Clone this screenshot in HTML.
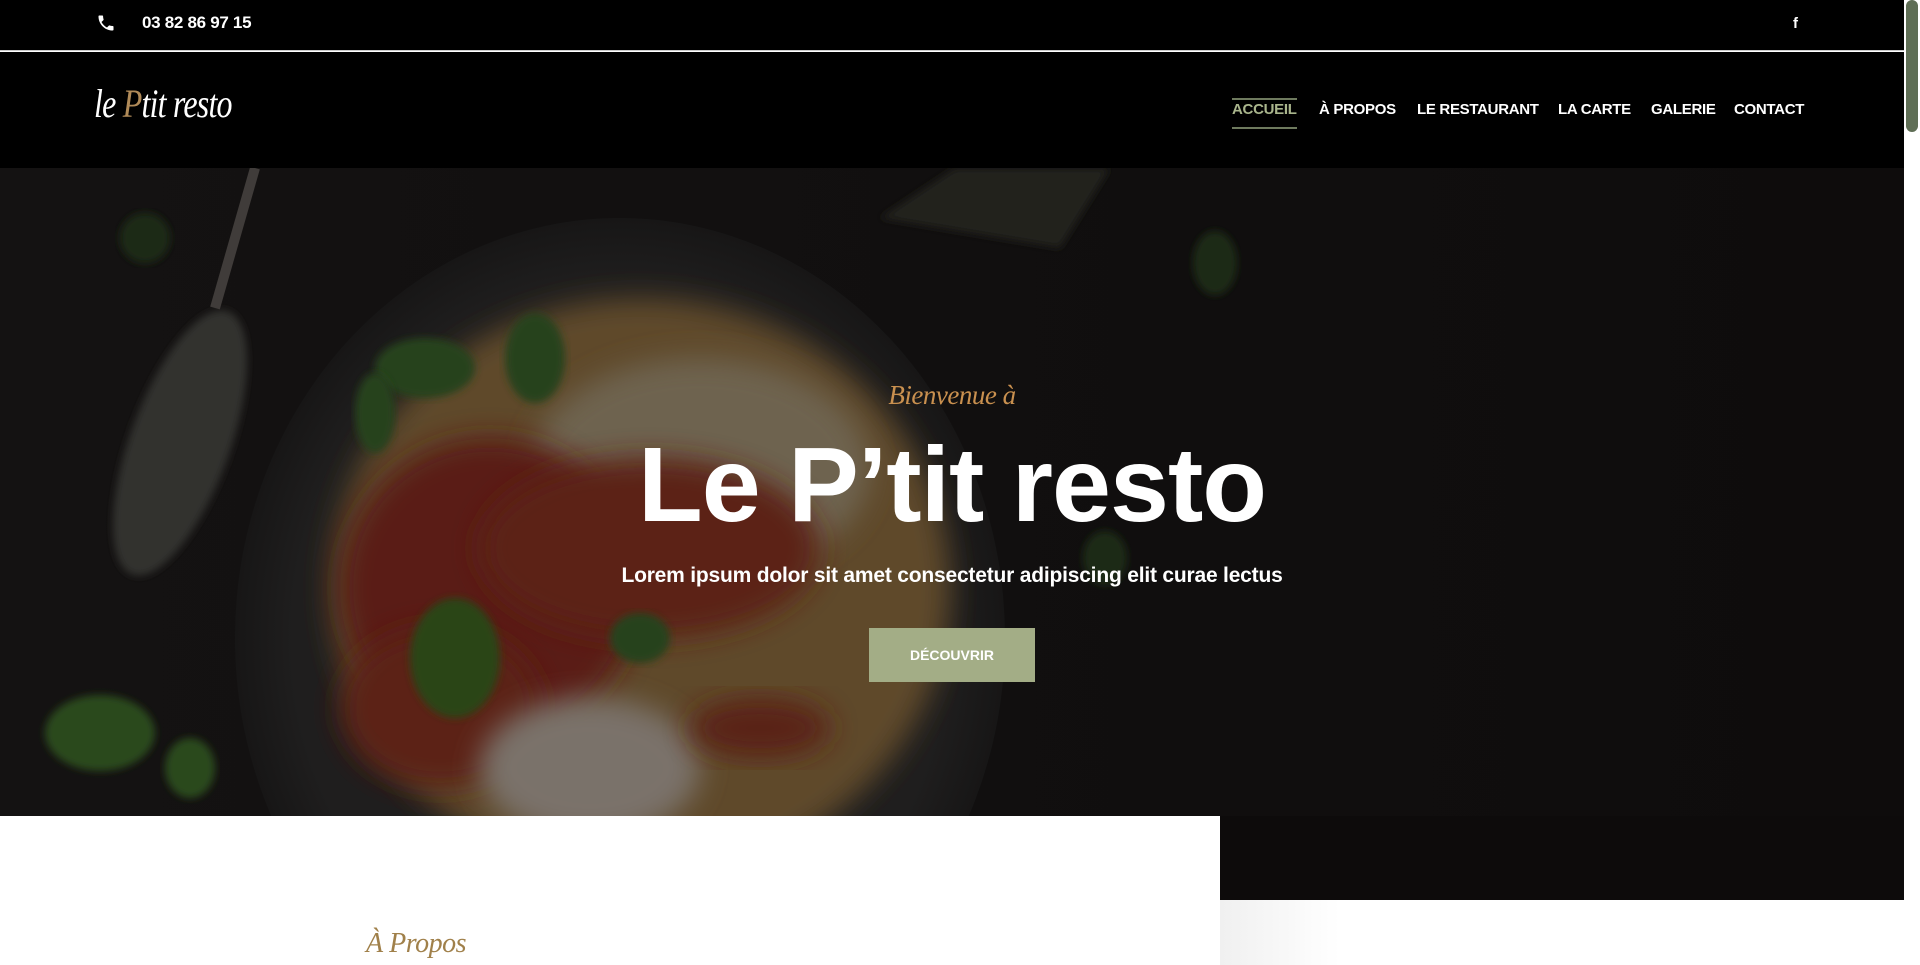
<!DOCTYPE html>
<html><head><meta charset="utf-8"><style>
*{margin:0;padding:0;box-sizing:border-box}
html,body{width:1920px;height:965px;overflow:hidden;background:#fff;font-family:"Liberation Sans",sans-serif;position:relative}
.top{position:absolute;left:0;top:0;width:1904px;height:51px;background:#000;border-bottom:1px solid #c9c9c9}
.phone{position:absolute;left:142px;top:13px;color:#fff;font-size:17px;font-weight:600;letter-spacing:-.3px}
.header{position:absolute;left:0;top:52px;width:1904px;height:116px;background:#000}
.logo{position:absolute;left:94px;top:80px;color:#fff;font-family:"Liberation Serif",serif;font-style:italic;font-size:40px;letter-spacing:-1px;transform:scaleX(.8);transform-origin:left}
.logo b{color:#b08a58;font-weight:400}
.hero{position:absolute;left:0;top:168px;width:1904px;height:648px;overflow:hidden;background:#131212}
.hero2{position:absolute;left:1220px;top:816px;width:684px;height:84px;background:#0d0b0b}
.shade{position:absolute;left:1220px;top:900px;width:120px;height:65px;background:linear-gradient(90deg,#f0f0f0,#fff)}
.sb{position:absolute;left:1904px;top:0;width:16px;height:965px;background:#fff}
.sb div{position:absolute;left:2px;top:0;width:12px;height:132px;background:#5f6e55;border-radius:6px}
.t{position:absolute;left:0;width:1904px;text-align:center;color:#fff}
.n{position:absolute;top:101px;color:#fff;font-size:15px;font-weight:700;letter-spacing:-.3px;white-space:nowrap}
</style></head><body>
<div class="top">
<svg style="position:absolute;left:96px;top:13px" width="20" height="20" viewBox="0 0 24 24"><path fill="#fff" d="M6.6 10.8c1.4 2.8 3.8 5.1 6.6 6.6l2.2-2.2c.3-.3.7-.4 1-.2 1.1.4 2.3.6 3.6.6.6 0 1 .4 1 1V20c0 .6-.4 1-1 1C10.6 21 3 13.4 3 4c0-.6.4-1 1-1h3.5c.6 0 1 .4 1 1 0 1.3.2 2.5.6 3.6.1.3 0 .7-.2 1z"/></svg>
<div class="phone">03 82 86 97 15</div>
<div style="position:absolute;left:1793px;top:15px;color:#fff;font-weight:700;font-size:15px">f</div>
</div>
<div class="header"></div>
<div class="logo">le <b>P</b>tit resto</div>
<div style="position:absolute;left:1232px;top:98px;width:65px;height:2px;background:#6e7a5e"></div>
<div style="position:absolute;left:1232px;top:127px;width:65px;height:2px;background:#6e7a5e"></div>
<div class="n" style="left:1232px;color:#a9b58c">ACCUEIL</div>
<div class="n" style="left:1319px">À PROPOS</div>
<div class="n" style="left:1417px">LE RESTAURANT</div>
<div class="n" style="left:1558px">LA CARTE</div>
<div class="n" style="left:1651px">GALERIE</div>
<div class="n" style="left:1734px">CONTACT</div>
<div class="hero">
<svg width="1904" height="648" style="position:absolute;left:0;top:0">
<defs><filter id="b" x="-20%" y="-20%" width="140%" height="140%"><feGaussianBlur stdDeviation="14"/></filter>
<filter id="b2"><feGaussianBlur stdDeviation="4"/></filter>
<radialGradient id="pl" cx=".5" cy=".5" r=".5"><stop offset=".85" stop-color="#1f1e1e"/><stop offset="1" stop-color="#171616"/></radialGradient>
<linearGradient id="bg" x1="0" x2="1"><stop offset="0" stop-color="#141212"/><stop offset="1" stop-color="#0e0c0c"/></linearGradient></defs>
<rect width="1904" height="648" fill="url(#bg)"/>
<ellipse cx="620" cy="470" rx="385" ry="420" fill="url(#pl)"/>
<ellipse cx="640" cy="420" rx="310" ry="290" fill="#5e4a2a" filter="url(#b)"/>
<ellipse cx="700" cy="300" rx="170" ry="110" fill="#6e6450" filter="url(#b)"/>
<ellipse cx="490" cy="420" rx="150" ry="150" fill="#5a1f14" filter="url(#b)"/>
<ellipse cx="650" cy="380" rx="170" ry="90" fill="#5c2216" filter="url(#b)"/>
<ellipse cx="440" cy="540" rx="100" ry="80" fill="#5c2014" filter="url(#b)"/>
<ellipse cx="590" cy="600" rx="110" ry="70" fill="#7a726a" filter="url(#b)"/>
<ellipse cx="760" cy="560" rx="70" ry="30" fill="#5a2016" filter="url(#b)"/>
<ellipse cx="455" cy="490" rx="45" ry="60" fill="#2a4419" filter="url(#b2)"/>
<ellipse cx="425" cy="200" rx="50" ry="30" fill="#27421b" filter="url(#b2)"/>
<ellipse cx="535" cy="190" rx="30" ry="45" fill="#27421b" filter="url(#b2)"/>
<ellipse cx="375" cy="245" rx="20" ry="40" fill="#27421b" filter="url(#b2)"/>
<ellipse cx="640" cy="470" rx="30" ry="25" fill="#27421b" filter="url(#b2)"/>
<ellipse cx="100" cy="565" rx="55" ry="38" fill="#2a481d" filter="url(#b2)"/>
<ellipse cx="190" cy="600" rx="25" ry="30" fill="#2a481d" filter="url(#b2)"/>
<ellipse cx="1105" cy="390" rx="22" ry="27" fill="#1f2c17" filter="url(#b2)"/>
<ellipse cx="1215" cy="95" rx="22" ry="32" fill="#1f2c17" filter="url(#b2)"/>
<ellipse cx="145" cy="70" rx="25" ry="25" fill="#1c2a16" filter="url(#b2)"/>
<ellipse cx="180" cy="275" rx="50" ry="140" transform="rotate(20 180 275)" fill="#33302e" filter="url(#b2)"/>
<path d="M215 140 L255 0" stroke="#403c3a" stroke-width="10"/>
<path d="M955 0 L1110 0 L1060 80 L880 50Z" fill="#24221e" filter="url(#b2)"/>
</svg>
</div>
<div class="hero2"></div>
<div class="shade"></div>
<div class="t" style="top:380px;color:#c9904f;font-family:'Liberation Serif',serif;font-style:italic;font-size:27px;letter-spacing:-.5px">Bienvenue à</div>
<div class="t" style="top:427px;font-size:106px;font-weight:700;letter-spacing:-1px;line-height:1.1">Le P’tit resto</div>
<div class="t" style="top:564px;font-size:21px;font-weight:600;letter-spacing:-.2px">Lorem ipsum dolor sit amet consectetur adipiscing elit curae lectus</div>
<div style="position:absolute;left:869px;top:628px;width:166px;height:54px;background:#a3ad86;color:#fff;font-size:14px;font-weight:700;text-align:center;line-height:54px">DÉCOUVRIR</div>
<div style="position:absolute;left:366px;top:928px;color:#a0804a;font-family:'Liberation Serif',serif;font-style:italic;font-size:28px;letter-spacing:-.5px;line-height:32px">À Propos</div>
<div class="sb"><div></div></div>
</body></html>
